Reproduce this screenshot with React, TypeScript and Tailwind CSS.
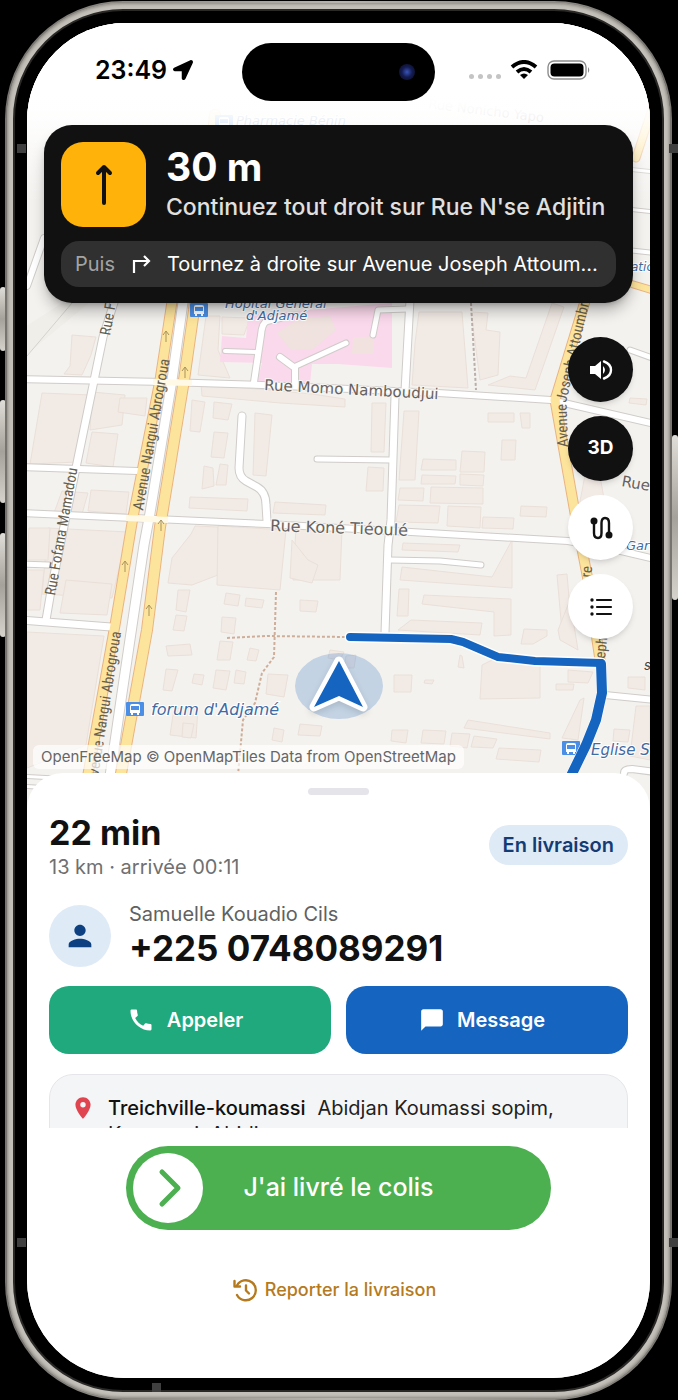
import React from 'react';
import { FaLocationArrow } from 'react-icons/fa';
import { MdCall, MdChatBubble, MdLocationOn, MdPerson } from 'react-icons/md';

const STREETS = [
  { d: 'M20 379 L165 382 L262 385 L438 393 L551 400 L655 424', w: 6 },
  { d: 'M20 467 L137 471', w: 6 },
  { d: 'M20 513 L133 518 L267 524 L411 532 L568 541 L621 551 L655 559', w: 6 },
  { d: 'M20 564 L49 565', w: 5 },
  { d: 'M20 620 L111 627', w: 7 },
  { d: 'M118 290 L103 337 L77 463 L52 585 L46 620', w: 7 },
  { d: 'M27 286 L44 238', w: 6 },
  { d: 'M410 300 L405 391', w: 7 },
  { d: 'M395 396 L391 520 L388 545 L385 633', w: 7 },
  { d: 'M242 416 L239 468 Q239 477 246 481 L257 487 Q266 492 266 505 L267 521', w: 7 },
  { d: 'M317 459 L390 460', w: 5 },
  { d: 'M390 560 L440 561 L481 565', w: 5 },
  { d: 'M605 695 L655 700', w: 6 },
  { d: 'M624 773 Q624 769 632 769 L655 772', w: 6 },
  { d: 'M630 350 L655 359', w: 5 },
  { d: 'M280 318 L267 321 Q262 323 261 335 L254 382', w: 6 },
  { d: 'M225 351 L257 352', w: 4 },
  { d: 'M280 357 L295 368 L295 384', w: 6 },
  { d: 'M296 366 L346 343', w: 5 },
  { d: 'M373 335 L378 310 L408 309', w: 5 },
  { d: 'M20 776 L130 782', w: 3 },
  { d: 'M20 786 L130 793', w: 3 },
  { d: 'M590 165 L655 172', w: 3 },
  { d: 'M590 205 L655 212', w: 3 },
  { d: 'M590 246 L655 253', w: 4 },
  { d: 'M184 295 L172 380 L150 513 L144 545 L121 700 L108 790', w: 9 },
];

const AVENUES = [
  { d: 'M173 295 L160 380 L133 517 L115 625 L86 785', w: 9 },
  { d: 'M215 115 L194 310 L184 380 L160 527 L147 630 L118 790', w: 10 },
  { d: 'M586 298 L555 400 L575 513 L588 580 L600 660', w: 9 },
  { d: 'M625 282 L655 291', w: 6 },
  { d: 'M655 100 L636 158', w: 7 },
];

const PATHS = [
  { d: 'M276 592 L274 657 L262 673 L255 703 L243 720 L238 775', c: '#cfae99' },
  { d: 'M227 638 L267 636 L346 637', c: '#cfae99' },
  { d: 'M471 303 L476 390', c: '#b9aea8' },
];

const BLOCKS = [
  '42,393 92,395 78,462 30,464', '72,335 96,337 91,355 82,375 64,374 70,366', '92,392 125,395 122,425 90,430',
  '92,432 118,434 113,467 86,463', '62,491 88,493 82,514 54,513', '48,528 128,532 112,598 42,594',
  '66,580 112,584 107,615 60,613', '29,528 50,528 48,560 27,560', '27,570 44,570 40,610 27,610',
  '27,632 104,636 86,745 27,768', '91,490 129,492 126,514 88,511', '120,398 147,398 145,416 118,412',
  '192,400 205,402 200,432 190,431', '214,402 232,404 228,420 213,418', '214,432 228,433 224,458 211,457',
  '255,413 272,415 266,476 253,475', '220,464 228,465 226,485 216,485', '204,466 213,468 214,486 202,489',
  '190,497 248,499 247,511 189,508', '275,502 326,505 325,515 273,513', '201,384 312,394 345,399 345,407 280,403 202,396',
  '191,534 195,526 218,527 218,575 192,585 168,583 172,558', '218,526 286,530 280,590 217,585', '296,527 342,529 340,580 293,580',
  '222,317 250,318 244,335 222,334', '206,316 220,316 218,350 230,378 198,375', '419,312 462,312 468,388 412,385 415,343',
  '471,312 488,313 486,330 500,332 498,375 480,380', '510,376 526,378 552,303 564,307 535,390 488,385',
  '404,411 419,411 415,480 399,480', '372,403 386,403 384,452 371,452', '488,413 514,413 514,422 488,422',
  '520,413 530,413 530,428 522,428', '502,440 516,440 515,460 501,460', '462,451 485,452 484,472 460,472',
  '423,459 456,460 456,470 421,470', '422,475 456,476 455,484 421,484', '460,474 484,475 483,486 460,485',
  '400,488 424,488 423,501 398,500', '431,487 483,488 483,504 430,503', '399,505 440,506 438,523 396,522',
  '448,506 481,507 480,528 447,526', '483,517 514,518 513,529 482,528', '521,506 547,507 546,517 520,516',
  '368,467 384,468 383,491 366,491', '403,543 460,545 458,552 402,550', '402,567 492,577 512,540 512,588 400,580',
  '424,595 511,599 511,635 494,636 494,612 422,604', '399,589 409,589 408,616 397,616', '411,620 482,623 480,635 398,630',
  '557,575 567,574 572,632 562,632', '524,629 547,630 547,636 533,644 521,644', '585,475 600,476 606,510 578,512',
  '630,398 647,399 646,405 629,403', '482,665 492,660 540,663 540,698 480,699', '568,670 593,672 588,683 568,682',
  '556,684 574,684 573,690 556,690', '394,675 412,675 411,692 394,692', '425,680 434,680 432,684 424,683',
  '580,700 584,698 578,740 562,738', '468,720 550,733 550,739 464,728', '423,730 446,731 444,744 421,743',
  '452,733 470,734 467,748 450,746', '474,736 497,739 493,748 471,747', '392,730 408,730 406,743 391,741',
  '499,748 541,750 539,762 496,759', '636,706 650,706 650,760 630,756', '614,729 630,730 628,742 613,741',
  '628,677 645,677 645,690 628,688', '578,650 560,640 558,630 570,600', '178,590 190,590 186,612 176,610',
  '226,593 240,595 238,606 224,604', '246,598 264,600 262,608 245,606', '176,615 187,616 184,631 173,630',
  '222,617 236,618 234,634 221,632', '166,646 190,644 192,655 168,656', '220,641 233,642 230,660 217,660',
  '250,648 259,650 256,661 247,660', '216,670 230,671 226,690 213,688', '194,674 204,675 202,685 192,683',
  '166,669 178,670 172,691 163,690', '236,670 246,672 244,684 234,683', '268,674 288,675 284,697 266,694',
  '292,540 308,560 318,565 312,583 290,578', '174,708 198,709 196,738 170,735', '183,723 194,724 191,738 182,737',
  '300,724 322,726 320,736 298,735', '274,728 284,730 282,742 272,740', '330,650 344,652 340,660 328,658',
  '346,656 356,655 354,668 344,668', '300,600 318,601 316,612 300,611', '460,655 462,656 464,668 458,667',
];

const ONE_WAY = [[166, 338], [185, 374], [161, 527], [125, 568], [149, 612]];

const BUS_STOPS = [[190, 303], [126, 702], [562, 741], [215, 115]];

const SLANTED = 'italic fill-[#3f6ba3] stroke-white stroke-[2px] [paint-order:stroke] font-["DejaVu_Sans",sans-serif]';
const STREET_NAME = 'fill-[#66625f] stroke-[#f7f5f2] stroke-[2px] [paint-order:stroke] font-["DejaVu_Sans",sans-serif]';
const AVENUE_NAME = 'fill-[#66604f] font-["Liberation_Sans_Narrow","Roboto_Condensed",Roboto,sans-serif] text-[15px]';

const MapCanvas: React.FC = () => (
  <svg
    className="absolute inset-0 h-full w-full"
    viewBox="27 23 623 790"
    preserveAspectRatio="xMidYMin slice"
    role="img"
    aria-label="Carte"
  >
    <rect x="0" y="0" width="700" height="900" fill="#f4f2ef" />
    <path d="M20 360 L95 298 L70 298 L20 330Z" fill="#efeee9" />
    <path d="M27 356 L72 303" stroke="#d5d2cd" fill="none" />
    <g fill="#f2eae5" stroke="#eae0d9" strokeWidth="1">
      {BLOCKS.map((points) => <polygon key={points} points={points} />)}
    </g>
    <path
      d="M248 315 L392 303 L392 368 L338 364 L312 364 L310 384 L257 381 L262 363 L220 362 L222 336 L246 338Z"
      fill="#fbd9ec"
    />
    <path d="M277 333 L298 319 L330 316 L336 330 L312 350 L290 349Z" fill="#efe2df" />
    <path d="M353 338 L374 336 L374 354 L352 354Z" fill="#f1e2e0" />

    {PATHS.map((p) => (
      <path key={p.d} d={p.d} fill="none" stroke={p.c} strokeWidth="2" strokeDasharray="3 2" />
    ))}
    <g fill="none" strokeLinecap="round" strokeLinejoin="round">
      {STREETS.map((s) => <path key={s.d} d={s.d} stroke="#cfccc9" strokeWidth={s.w + 2} />)}
      {AVENUES.map((s) => <path key={s.d} d={s.d} stroke="#eab380" strokeWidth={s.w + 2} />)}
      {STREETS.map((s) => <path key={s.d} d={s.d} stroke="#ffffff" strokeWidth={s.w} />)}
      {AVENUES.map((s) => <path key={s.d} d={s.d} stroke="#fde49c" strokeWidth={s.w} />)}
    </g>
    <g stroke="#fff9e6" strokeWidth="6">
      <path d="M153 382 L192 383" />
      <path d="M126 518 L168 520" />
    </g>

    <g fill="none" stroke="#a8935c" strokeWidth="1">
      {ONE_WAY.map(([x, y]) => (
        <path key={`${x}-${y}`} d={`M${x} ${y + 4} L${x} ${y - 7} M${x - 3} ${y - 3} L${x} ${y - 7} L${x + 3} ${y - 3}`} />
      ))}
    </g>

    {BUS_STOPS.map(([x, y]) => (
      <g key={`${x}-${y}`}>
        <rect x={x} y={y} width="18" height="14" rx="1" fill="#4a8ee6" />
        <path
          d={`M${x + 4} ${y + 11} V${y + 4} Q${x + 4} ${y + 2} ${x + 6} ${y + 2} H${x + 12} Q${x + 14} ${y + 2} ${x + 14} ${y + 4} V${y + 11} Z`}
          fill="#ffffff"
        />
        <rect x={x + 5} y={y + 4} width="8" height="4" fill="#4a8ee6" />
        <path d={`M${x + 5} ${y + 12} H${x + 7} M${x + 11} ${y + 12} H${x + 13}`} stroke="#ffffff" strokeWidth="2" />
      </g>
    ))}

    <text className={AVENUE_NAME} transform="translate(143 511) rotate(-80)">Avenue Nangui Abrogroua</text>
    <text className={AVENUE_NAME} transform="translate(97 784) rotate(-81)">Avenue Nangui Abrogroua</text>
    <text className={AVENUE_NAME} transform="translate(55 596) rotate(-80)">Rue Fofana Mamadou</text>
    <text className={AVENUE_NAME} transform="translate(110 336) rotate(-80)">Rue Fofana</text>
    <text className={AVENUE_NAME} transform="translate(568 447) rotate(-92)">Avenue</text>
    <text className={AVENUE_NAME} transform="translate(566 403) rotate(-77)">Joseph Attoumbre</text>
    <text className={AVENUE_NAME} transform="translate(591 578) rotate(-84)">re</text>
    <text className={AVENUE_NAME} transform="translate(605 659) rotate(-84)">eph</text>
    <text className={`${STREET_NAME} text-[15px]`} transform="translate(264 390) rotate(3)">Rue Momo Namboudjui</text>
    <text className={`${STREET_NAME} text-[16px]`} transform="translate(270 531) rotate(2)">Rue Koné Tiéoulé</text>
    <text className={`${STREET_NAME} text-[15px]`} transform="translate(621 486) rotate(10)">Rue</text>
    <text className={`${STREET_NAME} text-[13px]`} transform="translate(428 108) rotate(7)">Rue Nonicho Yapo</text>
    <text className={`${SLANTED} text-[13px]`} x="225" y="308">Hôpital Général</text>
    <text className={`${SLANTED} text-[13px]`} x="246" y="320">d'Adjamé</text>
    <text className={`${SLANTED} text-[16px]`} x="151" y="715">forum d'Adjamé</text>
    <text className={`${SLANTED} text-[15px]`} x="591" y="755">Eglise S</text>
    <text className={`${SLANTED} text-[13px]`} x="626" y="550">Gare</text>
    <text className={`${SLANTED} text-[12px]`} x="631" y="271">ation</text>
    <text className={`${SLANTED} text-[13px]`} x="236" y="125">Pharmacie Bénin</text>
    <text className="fill-[#444] text-[13px] italic" x="644" y="670">s</text>

    <g fill="none" strokeLinecap="round" strokeLinejoin="round">
      <path d="M350 637 L451 639 L463 642 L498 657 L535 661 L601 663 L602 693 L596 720 L586 745 L568 782" stroke="#ffffff" strokeWidth="11" />
      <path d="M350 637 L451 639 L463 642 L498 657 L535 661 L601 663" stroke="#1565c0" strokeWidth="8" />
      <path d="M601 664 L602 693 L596 720 L586 745 L568 782" stroke="#1565c0" strokeWidth="10" />
    </g>

    <ellipse cx="339" cy="686" rx="44" ry="33" fill="#1565c0" fillOpacity="0.22" />
    <path
      d="M339 661 L314 707 L339 696 L363 707 Z"
      fill="#1565c0"
      stroke="#ffffff"
      strokeWidth="9"
      strokeLinejoin="round"
      className="[paint-order:stroke] drop-shadow-md"
    />
  </svg>
);

const StatusBar: React.FC = () => (
  <div className="relative grid grid-cols-[1fr_193px_1fr] items-center pt-5">
    <div className="flex items-center gap-[6px] pb-1 pl-[68px] text-[25px] leading-8 font-semibold text-black">
      23:49
      <FaLocationArrow className="h-5 w-5" />
    </div>
    <div className="flex h-[58px] items-center justify-end rounded-full bg-black pr-5">
      <div className="h-4 w-4 rounded-full bg-[radial-gradient(circle,#3a54b8_0%,#141c52_45%,#0a0a18_100%)]"></div>
    </div>
    <div className="flex items-center gap-[9px] pb-1 pl-[34px]">
      <div className="flex gap-1 pt-3">
        {[0, 1, 2, 3].map((dot) => <span key={dot} className="h-[5px] w-[5px] rounded-full bg-[#c4c4c4]"></span>)}
      </div>
      <svg className="h-5 w-[28px]" viewBox="0 0 28 20" fill="none" stroke="#000" strokeWidth="4">
        <path d="M2 7 Q14 -3 26 7" />
        <path d="M7 12 Q14 6 21 12" />
        <path d="M14 19 L10 15 Q14 12 18 15 Z" fill="#000" stroke="none" />
      </svg>
      <svg className="h-5 w-[44px]" viewBox="0 0 44 20">
        <rect x="1" y="1" width="38" height="18" rx="6" fill="none" stroke="#8d8d8d" strokeWidth="1.4" />
        <rect x="3.5" y="3.5" width="33" height="13" rx="4" fill="#000" />
        <path d="M41 7 Q43.500 10 41 13Z" fill="#8d8d8d" />
      </svg>
    </div>
  </div>
);

const NavCard: React.FC = () => (
  <div className="relative mx-[17px] mt-6 rounded-[28px] bg-[#111111] px-[17px] pt-[17px] pb-4 shadow-lg shadow-black/30">
    <div className="flex items-center gap-5">
      <div className="flex h-[85px] w-[85px] shrink-0 items-center justify-center rounded-[22px] bg-[#ffb30a]">
        <svg className="h-11 w-5" viewBox="0 0 20 44" fill="none" stroke="#111" strokeWidth="4" strokeLinecap="round" strokeLinejoin="round">
          <path d="M10 40 V4 M4 10 L10 4 L16 10" />
        </svg>
      </div>
      <div className="min-w-0 pb-1">
        <h1 className="text-[39px] leading-[48px] font-bold text-white">30 m</h1>
        <p className="text-[23px] leading-[32px] font-medium whitespace-nowrap text-[#e0e0e0]">Continuez tout droit sur Rue N'se Adjitin</p>
      </div>
    </div>
    <div className="mt-[14px] flex h-[46px] items-center rounded-[18px] bg-[#303030] px-[14px] text-[20px]">
      <span className="text-[#a3a3a3]">Puis</span>
      <svg className="mx-4 h-[18px] w-5 shrink-0" viewBox="0 0 20 18" fill="none" stroke="#fff" strokeWidth="2.200">
        <path d="M3 18 V6 H18 M13 1 L18 6 L13 11" />
      </svg>
      <span className="truncate text-white">Tournez à droite sur Avenue Joseph Attoumbre</span>
    </div>
  </div>
);

const ROUND = 'flex h-[65px] w-[65px] items-center justify-center rounded-full shadow-md';

const MapControls: React.FC = () => (
  <div className="relative mt-[34px] mr-[17px] flex flex-col items-end gap-[14px]">
    <button className={`${ROUND} bg-[#111111]`} aria-label="Son">
      <svg className="h-6 w-6" viewBox="0 0 24 24" fill="none" stroke="#fff" strokeWidth="2.400" strokeLinecap="round">
        <path d="M1 8 H6 L12 3 V21 L6 16 H1 Z" fill="#fff" stroke="none" />
        <path d="M14 8 Q18 12 14 16 Z" fill="#fff" stroke="none" />
        <path d="M15 3.500 Q22 6 22 12 Q22 18 15 20.500" />
      </svg>
    </button>
    <button className={`${ROUND} bg-[#111111] text-[19px] font-bold text-white`}>3D</button>
    <button className={`${ROUND} bg-white`} aria-label="Itinéraire">
      <svg className="h-6 w-6" viewBox="0 0 24 24" fill="none" stroke="#111" strokeWidth="2.400">
        <path d="M5 5 V17 Q5 22 9 22 Q12.500 22 12.500 17 V7 Q12.500 2 16 2 Q20 2 20 7 V19" />
        <circle cx="5" cy="5" r="3.500" fill="#111" stroke="none" />
        <circle cx="20" cy="19" r="3.500" fill="#111" stroke="none" />
      </svg>
    </button>
    <button className={`${ROUND} bg-white`} aria-label="Étapes">
      <svg className="h-6 w-6" viewBox="0 0 24 24" fill="none" stroke="#111" strokeWidth="2.200" strokeLinecap="round">
        <path d="M8 5 H22 M8 12 H22 M8 19 H22" />
        <path d="M3 5 H3.010 M3 12 H3.010 M3 19 H3.010" strokeWidth="3.400" />
      </svg>
    </button>
  </div>
);

const DeliverySheet: React.FC = () => (
  <section className="relative -mt-9 flex flex-col rounded-t-[36px] bg-white px-[22px] pt-[15px] pb-[74px]">
    <div className="mx-auto h-[7px] w-[61px] rounded-full bg-[#e5e4ea]"></div>

    <div className="mt-4 flex items-center justify-between">
      <div>
        <h2 className="text-[34px] leading-[44px] font-bold text-[#111111]">22 min</h2>
        <p className="text-[20px] leading-[24px] text-[#707070]">13 km · arrivée 00:11</p>
      </div>
      <span className="rounded-full bg-[#deeaf6] px-[14px] py-[6px] text-[20px] leading-[28px] font-semibold text-[#123c73]">En livraison</span>
    </div>

    <div className="mt-[23px] flex items-center gap-[18px]">
      <div className="flex h-[62px] w-[62px] items-center justify-center rounded-full bg-[#deeaf6]">
        <MdPerson className="h-[34px] w-[34px] text-[#0d4080]" />
      </div>
      <div>
        <p className="text-[20px] leading-[24px] text-[#616161]">Samuelle Kouadio Cils</p>
        <p className="text-[35px] leading-[44px] font-bold text-[#111111]">+225 0748089291</p>
      </div>
    </div>

    <div className="mt-4 grid grid-cols-2 gap-[15px] text-[20px] font-semibold text-white">
      <button className="flex h-[68px] items-center justify-center gap-3 rounded-[20px] bg-[#1fa97c] pr-[10px]">
        <MdCall className="h-7 w-7" />
        Appeler
      </button>
      <button className="flex h-[68px] items-center justify-center gap-3 rounded-[20px] bg-[#1565c0] pr-[10px]">
        <MdChatBubble className="h-[26px] w-[26px]" />
        Message
      </button>
    </div>

    <div className="mt-5 h-[54px] overflow-hidden">
      <div className="flex gap-3 rounded-[24px] border border-[#e6e6ea] bg-[#f4f5f7] px-5 py-5 text-[20px] leading-[26px] text-[#222222]">
        <MdLocationOn className="h-[26px] w-[26px] shrink-0 text-[#e0444f]" />
        <p>
          <span className="mr-3 font-medium text-[#111111]">Treichville-koumassi</span>
          Abidjan Koumassi sopim,<br />
          Koumassi, Abidjan
        </p>
      </div>
    </div>

    <button className="relative mx-auto mt-[18px] flex h-[84px] w-[425px] max-w-full items-center justify-center rounded-full bg-[#4caf50] text-[25px] font-medium text-white">
      <span className="absolute inset-y-[7px] left-[7px] flex w-[70px] items-center justify-center rounded-full bg-white">
        <svg className="h-10 w-10" viewBox="0 0 40 40" fill="none" stroke="#4caf50" strokeWidth="5" strokeLinecap="round" strokeLinejoin="round">
          <path d="M14 4 L30 20 L14 36" />
        </svg>
      </span>
      J'ai livré le colis
    </button>

    <button className="mx-auto mt-[46px] flex items-center gap-2 pr-2 text-[18px] leading-[28px] font-medium text-[#b57a1e]">
      <svg className="h-6 w-6" viewBox="0 0 24 24" fill="none" stroke="currentColor" strokeWidth="2.400" strokeLinecap="round" strokeLinejoin="round">
        <path d="M4 17 A10 10 0 1 0 4 7.500" />
        <path d="M1.500 3 V8.500 H7" />
        <path d="M13 7.500 V12.500 L16 15.500" />
      </svg>
      Reporter la livraison
    </button>
  </section>
);

const SIDE_KEYS = [
  'left-0 top-[287px] h-[64px]',
  'left-0 top-[400px] h-[103px]',
  'left-0 top-[533px] h-[104px]',
  'right-0 top-[435px] h-[165px]',
];

const BANDS = [
  'left-[17px] top-[144px]',
  'left-[17px] top-[1238px]',
  'right-0 top-[144px]',
  'right-0 top-[1238px]',
  'left-[152px] bottom-[8px]',
];

const App: React.FC = () => {
  return (
    <div className='relative flex min-h-screen flex-col overflow-hidden bg-black pt-px pr-[6px] pl-[5px] font-["Inter",sans-serif]'>
      {SIDE_KEYS.map((key) => (
        <div key={key} className={`absolute w-[6px] rounded-sm bg-linear-to-b from-[#e0ded8] via-[#a5a29b] to-[#d6d3cc] ${key}`}></div>
      ))}
      <div className="relative flex flex-1 flex-col rounded-[118px] bg-linear-to-r from-[#77746f] via-[#b7b4ad] to-[#77746f] p-[2px]">
        <div className="flex flex-1 flex-col rounded-[116px] bg-[#c3c0b9] p-[6px] shadow-[inset_0_0_3px_1px_#8b8882]">
          <div className="flex flex-1 flex-col rounded-[110px] border-2 border-[#2b2927] bg-black p-[12px]">
            <main className="relative flex flex-1 flex-col overflow-hidden rounded-[98px] bg-white">
              <div className="relative flex-1 pb-[165px]">
                <MapCanvas />
                <div className="absolute inset-x-0 top-0 h-[180px] bg-linear-to-b from-white/95 from-45% to-white/0"></div>
                <div className="absolute inset-x-0 top-0 h-[130px] bg-linear-to-b from-white from-50% to-white/0"></div>
                <StatusBar />
                <NavCard />
                <MapControls />
                <div className="absolute bottom-[40px] left-[6px] rounded-md bg-white/70 px-2 text-[15px] leading-[24px] text-[#666666]">
                  OpenFreeMap © OpenMapTiles Data from OpenStreetMap
                </div>
              </div>
              <DeliverySheet />
            </main>
          </div>
        </div>
      </div>
      {BANDS.map((band) => (
        <div key={band} className={`absolute h-[9px] w-[9px] bg-[#3f3f3f] ${band}`}></div>
      ))}
    </div>
  );
};

export default App;
